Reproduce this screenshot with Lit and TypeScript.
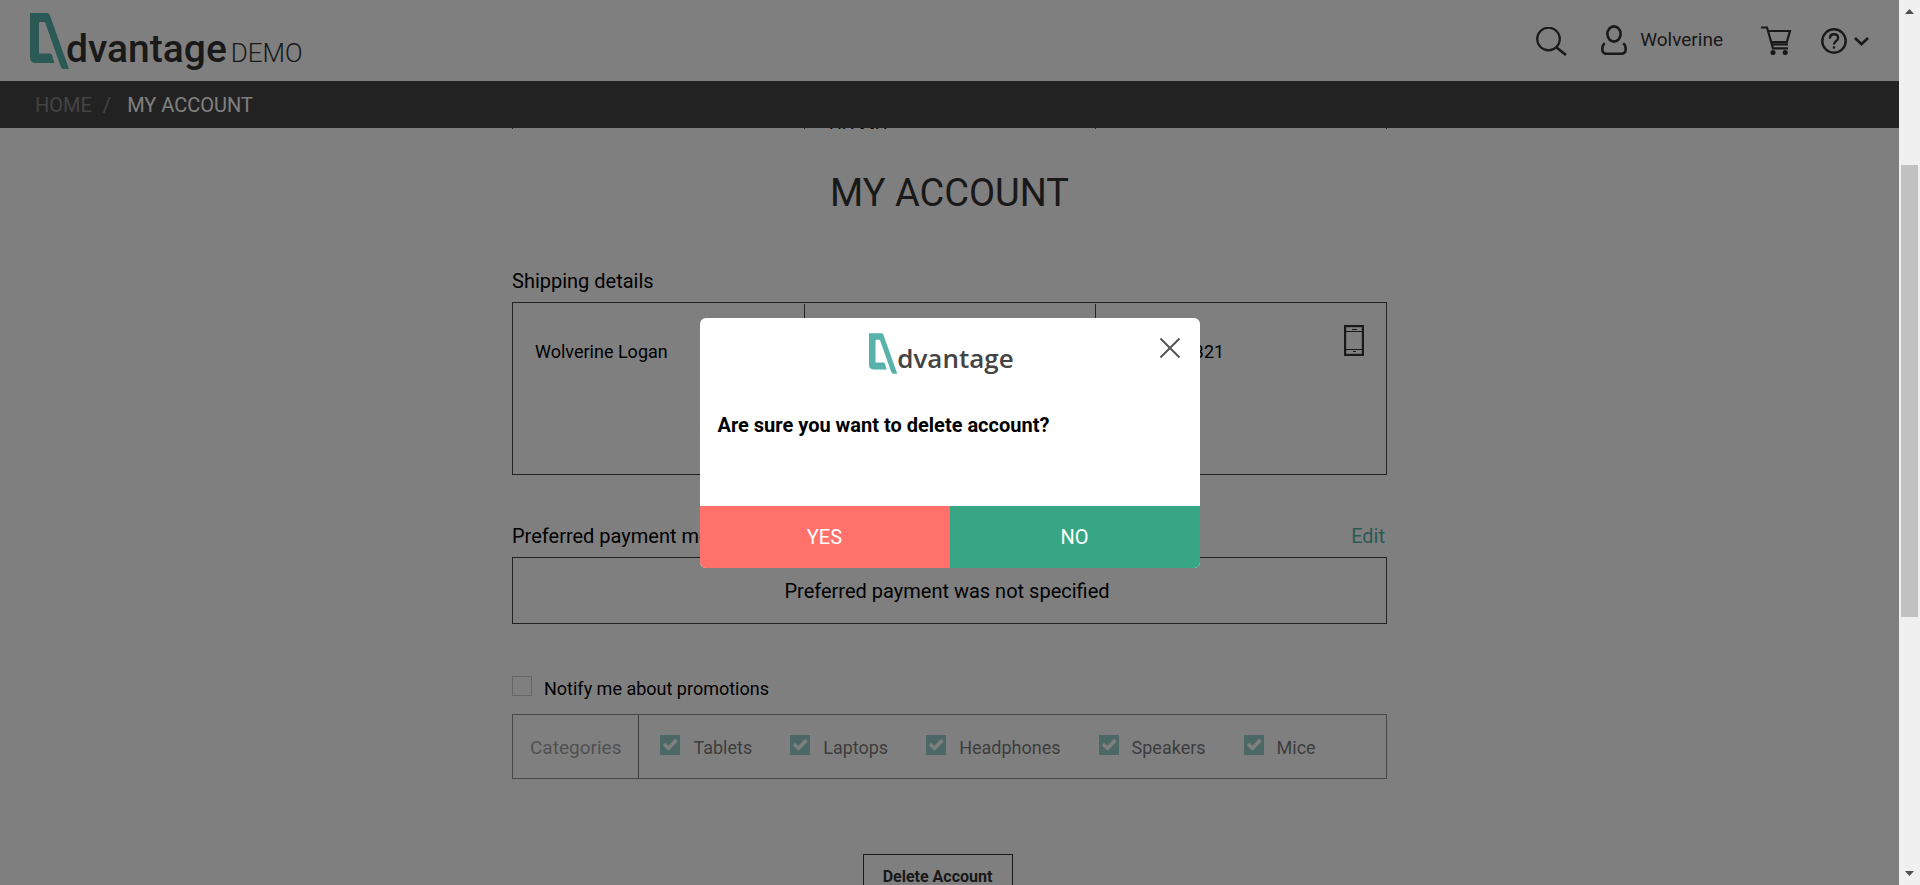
import { LitElement, html, svg, css } from "lit";
import { customElement, state } from "lit/decorators.js";

const logoMark = svg`
  <path fill="#57b2ab" fill-rule="evenodd"
    d="M0 0H17.5Q19 0 19.6 1.6L39 56H33.5Q31.5 56 30.8 54L15.4 10Q14.9 9 14 9H9.6Q9 9 9 9.6V40.5H20Q21.5 40.5 22 42L24.4 50H6Q0 50 0 44Z"/>`;

@customElement("app-root")
export class AppRoot extends LitElement {
  @state() private categories = ["Tablets", "Laptops", "Headphones", "Speakers", "Mice"];

  static styles = css`
    :host {
      display: grid;
      grid-template-columns: 1fr 21px;
      height: 100vh;
      overflow: hidden;
      font-family: Roboto, "Liberation Sans", sans-serif;
      font-size: 20px;
      line-height: 24px;
      color: #000;
      background: #fff;
    }
    * { box-sizing: border-box; }
    button { font: inherit; border: 0; background: none; padding: 0; color: inherit; cursor: pointer; }
    a { color: inherit; text-decoration: none; }
    h1, h2, p { margin: 0; font-size: 20px; font-weight: 400; }
    svg { display: block; flex: none; }
    .page {
      position: relative;
      display: flex;
      flex-direction: column;
      min-width: 0;
      min-height: 0;
      overflow: hidden;
    }
    .header {
      flex: none;
      height: 81px;
      display: flex;
      align-items: flex-start;
      justify-content: space-between;
      padding: 13px 30px 0 30px;
      color: #333;
    }
    .brand { display: flex; align-items: baseline; }
    .brand .mark { align-self: flex-start; }
    .brand .name { font-size: 39px; line-height: 72px; font-weight: 500; margin-left: -4px; }
    .brand .demo { font-size: 26px; line-height: 72px; font-weight: 300; margin-left: 4px; }
    .tools { display: flex; align-items: flex-start; padding-top: 12px; }
    .tools a, .tools button { display: flex; }
    .tools .search { margin: 2px 34px 0 0; }
    .tools .user { gap: 13px; margin-right: 38px; font-size: 19px; line-height: 30px; }
    .tools .cart { margin: 1px 29px 0 0; }
    .tools .help { gap: 7px; margin-top: 3px; align-items: center; }
    .crumbs {
      flex: none;
      height: 47px;
      display: flex;
      align-items: center;
      background: #444;
      color: #fff;
      padding-left: 35px;
    }
    .crumbs .home { color: #888; }
    .crumbs .sep { color: #888; margin: 0 16px 0 11px; }
    .main { flex: 1; min-height: 0; overflow: hidden; }
    .wrap { width: min(875px, 92%); margin: 0 auto; }
    .tail { display: grid; grid-template-columns: 1fr 1fr 1fr; height: 1px; overflow: hidden; border: solid #444; border-width: 0 1px; }
    .tail div + div { border-left: 1px solid #444; }
    .tail .cell { display: flex; align-items: flex-end; padding-left: 24px; line-height: 12px; font-size: 18px; }
    .title { font-size: 38px; line-height: 46px; text-align: center; color: #333; padding: 41px 0 53px; }
    .bar { display: flex; justify-content: space-between; line-height: 24px; padding: 0 2px 9px 0; }
    .bar a { color: #57b2ab; }
    .box { border: 1px solid #444; }
    .details { display: grid; grid-template-columns: 1fr 1fr 1fr; height: 173px; padding-top: 1px; margin-bottom: 49px; font-size: 18px; }
    .details .cell { display: flex; justify-content: space-between; padding: 36px 22px 0; }
    .details .cell + .cell { border-left: 1px solid #444; }
    .details .phone { margin-top: -15px; }
    .payment { text-align: center; padding: 21px 5px 20px 0; margin-bottom: 52px; }
    .check { display: flex; align-items: flex-start; font-size: 18px; line-height: 26px; }
    input {
      appearance: none;
      width: 20px;
      height: 20px;
      margin: 0;
      border: 1px solid #ccc;
      flex: none;
    }
    input:checked {
      border: 0;
      background: #57b2ab url("data:image/svg+xml,%3Csvg xmlns='http://www.w3.org/2000/svg' viewBox='0 0 20 20'%3E%3Cpath d='M4 9l4.5 4.2L16.5 5' fill='none' stroke='white' stroke-width='3.6'/%3E%3C/svg%3E");
    }
    .notify { gap: 12px; margin-bottom: 12px; }
    .cats { display: flex; height: 65px; opacity: 0.6; color: #000; margin-bottom: 75px; }
    .cats .head { display: flex; align-items: flex-start; padding: 20px 17px 0; border-right: 1px solid #222; color: #666; font-size: 19px; line-height: 26px; }
    .cats .list { display: flex; align-items: flex-start; gap: 38px; padding: 20px 0 0 21px; }
    .cats .check { gap: 13px; color: #222; }
    .center { display: flex; justify-content: center; padding-right: 24px; }
    .delete { min-width: 150px; border: 1px solid #333; color: #333; font-size: 16px; font-weight: 700; line-height: 24px; padding: 10px 17px; }
    .shade {
      position: absolute;
      inset: 0;
      display: flex;
      align-items: center;
      justify-content: center;
      background: rgba(0, 0, 0, 0.5);
    }
    .modal {
      width: 500px;
      height: 250px;
      display: flex;
      flex-direction: column;
      background: #fff;
      border-radius: 6px;
      overflow: hidden;
    }
    .top { display: grid; grid-template-columns: 1fr auto 1fr; padding: 15px 20px 0; color: #444; }
    .top .logo { grid-column: 2; display: flex; margin-right: 16px; }
    .top .name { font-family: "Open Sans", sans-serif; font-size: 26px; line-height: 50px; font-weight: 600; margin-left: -1px; }
    .top .close { justify-self: end; align-self: start; padding-top: 5px; }
    .ask { flex: 1; padding: 30px 18px 0; font-weight: 700; line-height: 24px; }
    .acts { display: grid; grid-template-columns: 1fr 1fr; height: 62px; color: #fff; }
    .acts .yes { background: #ff716a; }
    .acts .no { background: #36a685; }
    .scroll {
      display: flex;
      flex-direction: column;
      align-items: center;
      background: #f0f0f0;
      padding: 9px 2px;
    }
    .track { flex: 1; width: 17px; display: flex; flex-direction: column; padding: 151px 0 0; }
    .thumb { flex: 0 0 64%; background: #c1c1c1; }
  `;

  render() {
    return html`
      <div class="page">
        <header class="header">
          <a class="brand" href="#">
            <svg class="mark" width="40" height="57" viewBox="0 0 40 57">${logoMark}</svg>
            <span class="name">dvantage</span><span class="demo">DEMO</span>
          </a>
          <div class="tools">
            <button class="search" aria-label="Search">
              <svg width="31" height="29" viewBox="0 0 31 29" fill="none" stroke="#333" stroke-width="2.2">
                <circle cx="12.5" cy="12" r="11.3"/><path d="M20.5 20.5L30 28" stroke-width="2.6"/>
              </svg>
            </button>
            <a class="user" href="#">
              <svg width="26" height="31" viewBox="0 0 26 31" fill="none" stroke="#333" stroke-width="2.6">
                <ellipse cx="13" cy="9" rx="6.6" ry="7.6"/>
                <path d="M3.8 18.2C1.8 19.6 1.3 21.6 1.3 24C1.3 27.3 2.6 28.8 6 28.8H20C23.4 28.8 24.7 27.3 24.7 24C24.7 21.6 24.2 19.6 22.2 18.2"/>
              </svg>
              <span>Wolverine</span>
            </a>
            <a class="cart" href="#" aria-label="Cart">
              <svg width="31" height="29" viewBox="0 0 31 29" fill="none" stroke="#333" stroke-width="2.2">
                <path d="M0 1.5H6L12 22.3H27M7.5 5H29L25.8 16H10M10.5 18.4H27"/>
                <circle cx="12" cy="26.5" r="2.6" fill="#333" stroke="none"/><circle cx="24.2" cy="26.5" r="2.6" fill="#333" stroke="none"/>
              </svg>
            </a>
            <button class="help" aria-label="Help">
              <svg width="26" height="26" viewBox="0 0 26 26" fill="none" stroke="#333" stroke-width="2.4">
                <circle cx="13" cy="13" r="11.7"/>
                <path d="M8.9 10.4C8.9 7.6 10.7 6.3 13 6.3C15.5 6.3 17.1 7.8 17.1 9.9C17.1 12.9 13 12.9 13 16.6"/>
                <path d="M13 18.3V20.6"/>
              </svg>
              <svg width="15" height="9" viewBox="0 0 15 9" fill="none" stroke="#333" stroke-width="2.6"><path d="M1 1L7.5 7.2L14 1"/></svg>
            </button>
          </div>
        </header>
        <nav class="crumbs">
          <a class="home" href="#">HOME</a><span class="sep">/</span><span>MY ACCOUNT</span>
        </nav>
        <main class="main">
          <div class="wrap">
            <div class="tail"><div></div><div class="cell">HH MH</div><div></div></div>
            <h1 class="title">MY ACCOUNT</h1>
            <div class="bar"><h2>Shipping details</h2></div>
            <section class="box details">
              <div class="cell">Wolverine Logan</div>
              <div class="cell"></div>
              <div class="cell"><span>098-7654321</span>
                <svg class="phone" width="20" height="31" viewBox="0 0 20 31" fill="none" stroke="#333">
                  <rect x="1" y="1" width="18" height="29" stroke-width="2.4"/><path d="M2 6.5H18M2 24.5H18M8 4.5H13M9 26.5H12"/>
                </svg>
              </div>
            </section>
            <div class="bar"><h2>Preferred payment method</h2><a href="#">Edit</a></div>
            <p class="box payment">Preferred payment was not specified</p>
            <label class="check notify"><input type="checkbox" />Notify me about promotions</label>
            <section class="box cats">
              <div class="head">Categories</div>
              <div class="list">
                ${this.categories.map((c) => html`<label class="check"><input type="checkbox" checked />${c}</label>`)}
              </div>
            </section>
            <div class="center"><button class="delete">Delete Account</button></div>
          </div>
        </main>
        <div class="shade">
          <section class="modal" role="dialog" aria-modal="true" aria-labelledby="ask">
            <div class="top">
              <div class="logo">
                <svg width="29" height="41" viewBox="0 0 40 56">${logoMark}</svg>
                <span class="name">dvantage</span>
              </div>
              <button class="close" aria-label="Close">
                <svg width="20" height="20" viewBox="0 0 20 20" fill="none" stroke="#555" stroke-width="2"><path d="M.5 .5L19.5 19.5M19.5 .5L.5 19.5"/></svg>
              </button>
            </div>
            <p class="ask" id="ask">Are sure you want to delete account?</p>
            <div class="acts"><button class="yes">YES</button><button class="no">NO</button></div>
          </section>
        </div>
      </div>
      <div class="scroll" aria-hidden="true">
        <svg width="9" height="5" viewBox="0 0 9 5"><path fill="#505050" d="M4.5 0L9 5H0Z"/></svg>
        <div class="track"><div class="thumb"></div></div>
        <svg width="9" height="5" viewBox="0 0 9 5"><path fill="#505050" d="M0 0H9L4.5 5Z"/></svg>
      </div>
    `;
  }
}
